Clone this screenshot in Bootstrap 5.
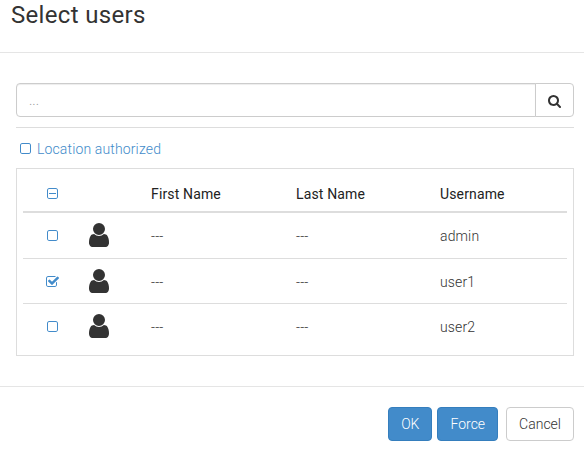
<!DOCTYPE html>
<html lang="en">
<head>
<meta charset="utf-8">
<meta name="viewport" content="width=device-width, initial-scale=1">
<title>Select users</title>
<link href="https://cdn.jsdelivr.net/npm/bootstrap@5.3.0/dist/css/bootstrap.min.css" rel="stylesheet">
<style>
  body { font-family: Roboto, sans-serif; font-size: 14px; font-weight: 300; line-height: 20px; letter-spacing: .14px; color: #333; background: #fff; overflow: hidden; }
  .dialog-head { height: 53px; border-bottom: 1px solid #e5e5e5; padding: 1px 0 0 11px; }
  .dialog-head h4 { font-size: 24px; font-weight: 400; line-height: 28px; letter-spacing: .32px; }
  .dialog-body { height: 333px; padding: 30px 10px 0 16px; }
  .search-box .form-control { height: 34px; font-size: 14px; font-weight: 300; border-color: #ccc; border-radius: 4px; padding: 6px 12px; box-shadow: inset 0 1px 1px rgba(0,0,0,.075); }
  .search-box .form-control::placeholder { color: #999; }
  .search-box .btn { width: 39px; height: 34px; border-color: #ccc; border-radius: 4px; padding: 2px 0 0; }
  .filter-row { height: 41px; margin-top: 10px; border-top: 1px solid #ddd; padding: 1px 0 0 4px; gap: 6px; }
  .accent { color: #428bca; }
  .user-panel { height: 188px; border: 1px solid #ddd; padding: 3px 6px 0; }
  .user-table { --bs-table-color: #333; table-layout: fixed; border-collapse: separate; border-spacing: 0; }
  .user-table > :not(caption) > * > * { padding: 13px 8px 0; border: 0; vertical-align: top; }
  .user-table thead th { height: 41px; font-weight: 400; letter-spacing: .14px; color: #222; padding-top: 12px; border-bottom: 2px solid #ddd; }
  .user-table tbody td { height: 45px; }
  .user-table tbody tr:first-child td { height: 46px; }
  .user-table tbody tr:not(:last-child) td { border-bottom: 1px solid #ddd; }
  .user-table tr > :first-child { padding: 17px 0 0 24px; }
  .user-table thead tr > :first-child { padding-top: 16px; }
  .user-table tbody tr > :nth-child(2) { padding-top: 10px; }
  .user-table tbody tr.chosen > :first-child { padding-left: 23px; }
  .c-check { width: 58px; } .c-photo { width: 62px; } .c-first { width: 145px; } .c-last { width: 144px; }
  svg { display: block; fill: currentColor; overflow: visible; }
  .dialog-foot { height: 68px; border-top: 1px solid #e5e5e5; padding: 20px 10px 0 0; }
  .dialog-foot .btn { height: 34px; font-size: 14px; font-weight: 300; line-height: 20px; padding: 6px 12px; border-radius: 4px; }
  .dialog-foot .btn-force { margin-left: 5px; }
  .btn-act { color: #fff; background: #428bca; border-color: #357ebd; }
  .btn-plain { color: #333; background: #fff; border-color: #ccc; }
</style>
<script src="https://cdn.jsdelivr.net/npm/bootstrap@5.3.0/dist/js/bootstrap.bundle.min.js"></script>
</head>
<body>
<svg class="d-none">
  <symbol id="i-box" viewBox="0 0 1408 1408"><path d="M1120 128h-832q-66 0-113 47t-47 113v832q0 66 47 113t113 47h832q66 0 113-47t47-113v-832q0-66-47-113t-113-47zm288 160v832q0 119-84.500 203.500t-203.500 84.500h-832q-119 0-203.500-84.500t-84.500-203.500v-832q0-119 84.500-203.500t203.500-84.500h832q119 0 203.500 84.500t84.500 203.500z"/></symbol>
  <symbol id="i-person" viewBox="256 128 1280 1536"><path d="M1536 1399q0 109-62.500 187t-150.500 78h-854q-88 0-150.500-78t-62.500-187q0-85 8.500-160.500t31.500-152 58.500-131 94-89 134.500-34.500q131 128 313 128t313-128q76 0 134.500 34.500t94 89 58.500 131 31.500 152 8.500 160.500zm-256-887q0 159-112.500 271.500t-271.500 112.500-271.500-112.500-112.500-271.500 112.500-271.500 271.500-112.500 271.500 112.500 112.500 271.500z"/></symbol>
</svg>
<header class="dialog-head"><h4 class="m-0">Select users</h4></header>
<main class="dialog-body">
  <div class="input-group search-box">
    <input type="text" class="form-control" placeholder="..." aria-label="Search">
    <button class="btn btn-plain d-flex align-items-center justify-content-center" type="button" aria-label="Search">
      <svg width="13" height="13" viewBox="64 128 1664 1664"><path d="M1216 832q0-185-131.500-316.500t-316.500-131.500-316.500 131.500-131.500 316.500 131.500 316.500 316.500 131.500 316.500-131.500 131.500-316.500zm512 832q0 52-38 90t-90 38q-54 0-90-38l-343-342q-179 124-399 124-143 0-273.500-55.500t-225-150-150-225-55.500-273.500 55.500-273.500 150-225 225-150 273.500-55.500 273.500 55.500 225 150 150 225 55.500 273.500q0 220-124 399l343 343q37 37 37 90z"/></svg>
    </button>
  </div>
  <div class="filter-row d-flex align-items-center accent">
    <svg width="11" height="11"><use href="#i-box"/></svg><span>Location authorized</span>
  </div>
  <div class="user-panel">
    <table class="table user-table mb-0">
      <colgroup><col class="c-check"><col class="c-photo"><col class="c-first"><col class="c-last"><col></colgroup>
      <thead><tr>
        <th><svg class="accent" width="11" height="11"><use href="#i-box"/><rect x="2" y="5" width="7" height="1"/></svg></th>
        <th></th><th>First Name</th><th>Last Name</th><th>Username</th>
      </tr></thead>
      <tbody>
        <tr><td><svg class="accent" width="11" height="11"><use href="#i-box"/></svg></td><td><svg width="20" height="24"><use href="#i-person"/></svg></td><td>---</td><td>---</td><td>admin</td></tr>
        <tr class="chosen"><td><svg class="accent" width="13" height="11" viewBox="64 128 1664 1408"><path d="M1472 930v318q0 119-84.500 203.500t-203.500 84.500h-832q-119 0-203.500-84.500t-84.500-203.500v-832q0-119 84.500-203.500t203.500-84.500h832q63 0 117 25 15 7 18 23 3 17-9 29l-49 49q-10 10-23 10-3 0-9-2-23-6-45-6h-832q-66 0-113 47t-47 113v832q0 66 47 113t113 47h832q66 0 113-47t47-113v-254q0-13 9-22l64-64q10-10 23-10 6 0 12 3 20 8 20 29zm231-489l-814 814q-24 24-57 24t-57-24l-430-430q-24-24-24-57t24-57l110-110q24-24 57-24t57 24l263 263 647-647q24-24 57-24t57 24l110 110q24 24 24 57t-24 57z"/></svg></td><td><svg width="20" height="24"><use href="#i-person"/></svg></td><td>---</td><td>---</td><td>user1</td></tr>
        <tr><td><svg class="accent" width="11" height="11"><use href="#i-box"/></svg></td><td><svg width="20" height="24"><use href="#i-person"/></svg></td><td>---</td><td>---</td><td>user2</td></tr>
      </tbody>
    </table>
  </div>
</main>
<footer class="dialog-foot d-flex justify-content-end align-items-start">
  <button type="button" class="btn btn-act">OK</button>
  <button type="button" class="btn btn-act btn-force">Force</button>
  <button type="button" class="btn btn-plain ms-2">Cancel</button>
</footer>
</body>
</html>
